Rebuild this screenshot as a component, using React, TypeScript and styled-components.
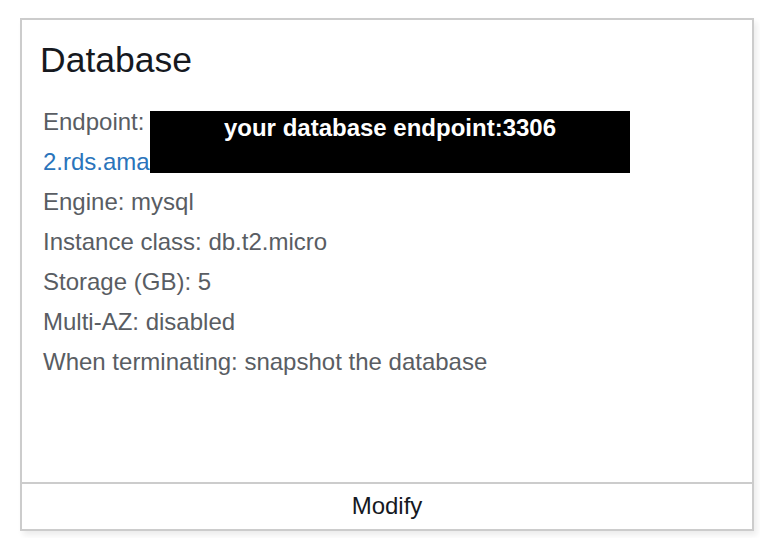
import React from "react";
import styled, { createGlobalStyle } from "styled-components";

const Global = createGlobalStyle`
  html, body { margin: 0; padding: 0; background: #fff; }
  body { font-family: "Liberation Sans", Arial, Helvetica, sans-serif; }
`;

const Page = styled.div`
  padding: 18px 0 0 20px;
  width: 760px;
  height: 538px;
  box-sizing: border-box;
`;

const Card = styled.section`
  width: 734px;
  height: 513px;
  box-sizing: border-box;
  border: 2px solid #cccccc;
  background: #fff;
  box-shadow: 3px 4px 6px rgba(0, 0, 0, 0.08);
  display: flex;
  flex-direction: column;
`;

const Body = styled.div`
  flex: 1;
  padding: 19px 18px 0 18px;
`;

const Title = styled.h2`
  margin: 0 0 21px 0;
  font-size: 35.5px;
  font-weight: 400;
  line-height: 42px;
  color: #16191f;
`;

const List = styled.div`
  padding-left: 3px;
  display: flex;
  flex-direction: column;
`;

const Row = styled.div`
  font-size: 24px;
  line-height: 40px;
  color: #595d63;
  white-space: nowrap;
`;

const EndpointBlock = styled.div`
  position: relative;
`;

const Link = styled.a`
  color: #2a74bb;
  text-decoration: none;
`;

const Redaction = styled.div`
  position: absolute;
  left: 107px;
  top: 9px;
  width: 480px;
  height: 62px;
  background: #000;
  color: #fff;
  font-weight: 700;
  font-size: 24px;
  line-height: 34px;
  text-align: center;
`;

const Footer = styled.button`
  all: unset;
  box-sizing: border-box;
  height: 47px;
  border-top: 2px solid #cccccc;
  display: flex;
  align-items: center;
  justify-content: center;
  padding-bottom: 1px;
  font-family: "Liberation Sans", Arial, sans-serif;
  font-size: 24px;
  color: #16191f;
  cursor: pointer;
`;

export default function App() {
  return (
    <>
      <Global />
      <Page>
        <Card>
          <Body>
            <Title>Database</Title>
            <List>
              <EndpointBlock>
                <Row>Endpoint: </Row>
                <Row>
                  <Link href="#">2.rds.ama</Link>
                </Row>
                <Redaction>your database endpoint:3306</Redaction>
              </EndpointBlock>
              <Row>Engine: mysql</Row>
              <Row>Instance class: db.t2.micro</Row>
              <Row>Storage (GB): 5</Row>
              <Row>Multi-AZ: disabled</Row>
              <Row>When terminating: snapshot the database</Row>
            </List>
          </Body>
          <Footer>Modify</Footer>
        </Card>
      </Page>
    </>
  );
}
